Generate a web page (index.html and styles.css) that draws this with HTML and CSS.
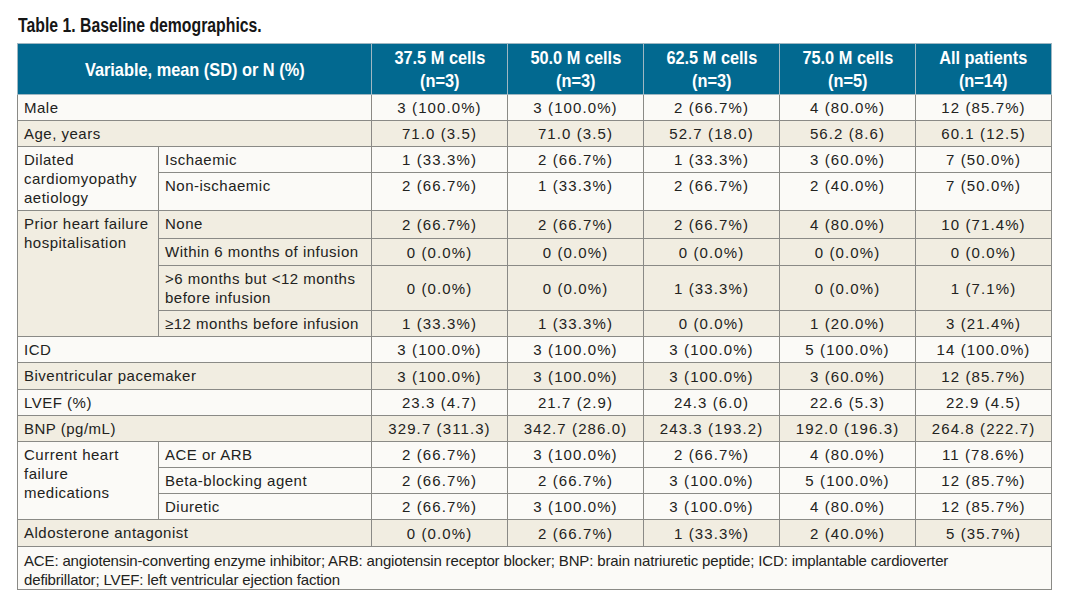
FILE: index.html
```html
<!DOCTYPE html>
<html>
<head>
<meta charset="utf-8">
<link rel="stylesheet" href="styles.css">
</head>
<body>
<div class="page">
  <h1 class="title"><span class="cond">Table 1. Baseline demographics.</span></h1>
  <table class="tbl">
    <colgroup>
      <col class="c-a"><col class="c-b"><col class="c-n"><col class="c-n"><col class="c-n"><col class="c-n"><col class="c-n">
    </colgroup>
    <thead>
      <tr class="hdr">
        <th colspan="2"><span class="cond">Variable, mean (SD) or N (%)</span></th>
        <th><span class="cond">37.5 M cells<br>(n=3)</span></th>
        <th><span class="cond">50.0 M cells<br>(n=3)</span></th>
        <th><span class="cond">62.5 M cells<br>(n=3)</span></th>
        <th><span class="cond">75.0 M cells<br>(n=5)</span></th>
        <th><span class="cond">All patients<br>(n=14)</span></th>
      </tr>
    </thead>
    <tbody>
      <tr class="w r26"><td colspan="2" class="lab">Male</td><td>3 (100.0%)</td><td>3 (100.0%)</td><td>2 (66.7%)</td><td>4 (80.0%)</td><td>12 (85.7%)</td></tr>
      <tr class="b r26"><td colspan="2" class="lab">Age, years</td><td>71.0 (3.5)</td><td>71.0 (3.5)</td><td>52.7 (18.0)</td><td>56.2 (8.6)</td><td>60.1 (12.5)</td></tr>
      <tr class="w r26"><td rowspan="2" class="lab">Dilated cardiomyopathy aetiology</td><td class="lab">Ischaemic</td><td>1 (33.3%)</td><td>2 (66.7%)</td><td>1 (33.3%)</td><td>3 (60.0%)</td><td>7 (50.0%)</td></tr>
      <tr class="w r38"><td class="lab">Non-ischaemic</td><td class="top">2 (66.7%)</td><td class="top">1 (33.3%)</td><td class="top">2 (66.7%)</td><td class="top">2 (40.0%)</td><td class="top">7 (50.0%)</td></tr>
      <tr class="b r28"><td rowspan="4" class="lab">Prior heart failure hospitalisation</td><td class="lab">None</td><td>2 (66.7%)</td><td>2 (66.7%)</td><td>2 (66.7%)</td><td>4 (80.0%)</td><td>10 (71.4%)</td></tr>
      <tr class="b r27"><td class="lab">Within 6 months of infusion</td><td>0 (0.0%)</td><td>0 (0.0%)</td><td>0 (0.0%)</td><td>0 (0.0%)</td><td>0 (0.0%)</td></tr>
      <tr class="b r45"><td class="lab">&gt;6 months but &lt;12 months before infusion</td><td>0 (0.0%)</td><td>0 (0.0%)</td><td>1 (33.3%)</td><td>0 (0.0%)</td><td>1 (7.1%)</td></tr>
      <tr class="b r26"><td class="lab">≥12 months before infusion</td><td>1 (33.3%)</td><td>1 (33.3%)</td><td>0 (0.0%)</td><td>1 (20.0%)</td><td>3 (21.4%)</td></tr>
      <tr class="w r26"><td colspan="2" class="lab">ICD</td><td>3 (100.0%)</td><td>3 (100.0%)</td><td>3 (100.0%)</td><td>5 (100.0%)</td><td>14 (100.0%)</td></tr>
      <tr class="b r27"><td colspan="2" class="lab">Biventricular pacemaker</td><td>3 (100.0%)</td><td>3 (100.0%)</td><td>3 (100.0%)</td><td>3 (60.0%)</td><td>12 (85.7%)</td></tr>
      <tr class="w r26"><td colspan="2" class="lab">LVEF (%)</td><td>23.3 (4.7)</td><td>21.7 (2.9)</td><td>24.3 (6.0)</td><td>22.6 (5.3)</td><td>22.9 (4.5)</td></tr>
      <tr class="b r26"><td colspan="2" class="lab">BNP (pg/mL)</td><td>329.7 (311.3)</td><td>342.7 (286.0)</td><td>243.3 (193.2)</td><td>192.0 (196.3)</td><td>264.8 (222.7)</td></tr>
      <tr class="w r26"><td rowspan="3" class="lab">Current heart failure medications</td><td class="lab">ACE or ARB</td><td>2 (66.7%)</td><td>3 (100.0%)</td><td>2 (66.7%)</td><td>4 (80.0%)</td><td>11 (78.6%)</td></tr>
      <tr class="w r26"><td class="lab">Beta-blocking agent</td><td>2 (66.7%)</td><td>2 (66.7%)</td><td>3 (100.0%)</td><td>5 (100.0%)</td><td>12 (85.7%)</td></tr>
      <tr class="w r26"><td class="lab">Diuretic</td><td>2 (66.7%)</td><td>3 (100.0%)</td><td>3 (100.0%)</td><td>4 (80.0%)</td><td>12 (85.7%)</td></tr>
      <tr class="b r27"><td colspan="2" class="lab">Aldosterone antagonist</td><td>0 (0.0%)</td><td>2 (66.7%)</td><td>1 (33.3%)</td><td>2 (40.0%)</td><td>5 (35.7%)</td></tr>
      <tr class="w r43"><td colspan="7" class="lab note">ACE: angiotensin-converting enzyme inhibitor; ARB: angiotensin receptor blocker; BNP: brain natriuretic peptide; ICD: implantable cardioverter defibrillator; LVEF: left ventricular ejection faction</td></tr>
    </tbody>
  </table>
</div>
</body>
</html>
```

FILE: styles.css
```css
html, body {
  margin: 0;
  padding: 0;
  background: #ffffff;
}

.page {
  padding: 14px 16px 0 17px;
  font-family: "Liberation Sans", Arial, sans-serif;
  color: #222220;
}

.cond {
  display: inline-block;
  transform: scaleX(0.86);
  transform-origin: center center;
}

.title {
  margin: 0 0 7px 1px;
  font-family: "Liberation Sans", Arial, sans-serif;
  font-weight: bold;
  font-size: 19.5px;
  line-height: 22px;
  color: #161616;
  white-space: nowrap;
}

.title .cond {
  transform: scaleX(0.81);
  transform-origin: left center;
}

.tbl {
  width: 1034px;
  border-collapse: collapse;
  table-layout: fixed;
  font-size: 15px;
  line-height: 19px;
}

.c-a { width: 141px; }
.c-b { width: 213px; }
.c-n { width: 136px; }

.tbl td, .tbl th {
  border: 1px solid #8a8a86;
  padding: 0 4px;
  text-align: center;
  vertical-align: middle;
}

.tbl td {
  letter-spacing: 1.1px;
}

.hdr th {
  background: #026990;
  color: #ffffff;
  font-weight: bold;
  font-size: 19px;
  line-height: 23px;
  height: 50px;
  padding: 0;
  white-space: nowrap;
  border-color: #9fb7c2;
}

.w td { background: #fbfaf7; }
.b td { background: #f1ede1; }

.tbl td.lab {
  text-align: left;
  vertical-align: top;
  padding: 3px 4px 0 6px;
  letter-spacing: 0.5px;
}

.tbl td.top {
  vertical-align: top;
  padding-top: 3px;
}

.tbl td.note {
  padding: 4px 100px 0 6px;
  line-height: 19px;
  letter-spacing: -0.15px;
}

.r26 { height: 26px; }
.r27 { height: 27px; }
.r28 { height: 28px; }
.r38 { height: 38px; }
.r43 { height: 43px; }
.r45 { height: 45px; }
```
